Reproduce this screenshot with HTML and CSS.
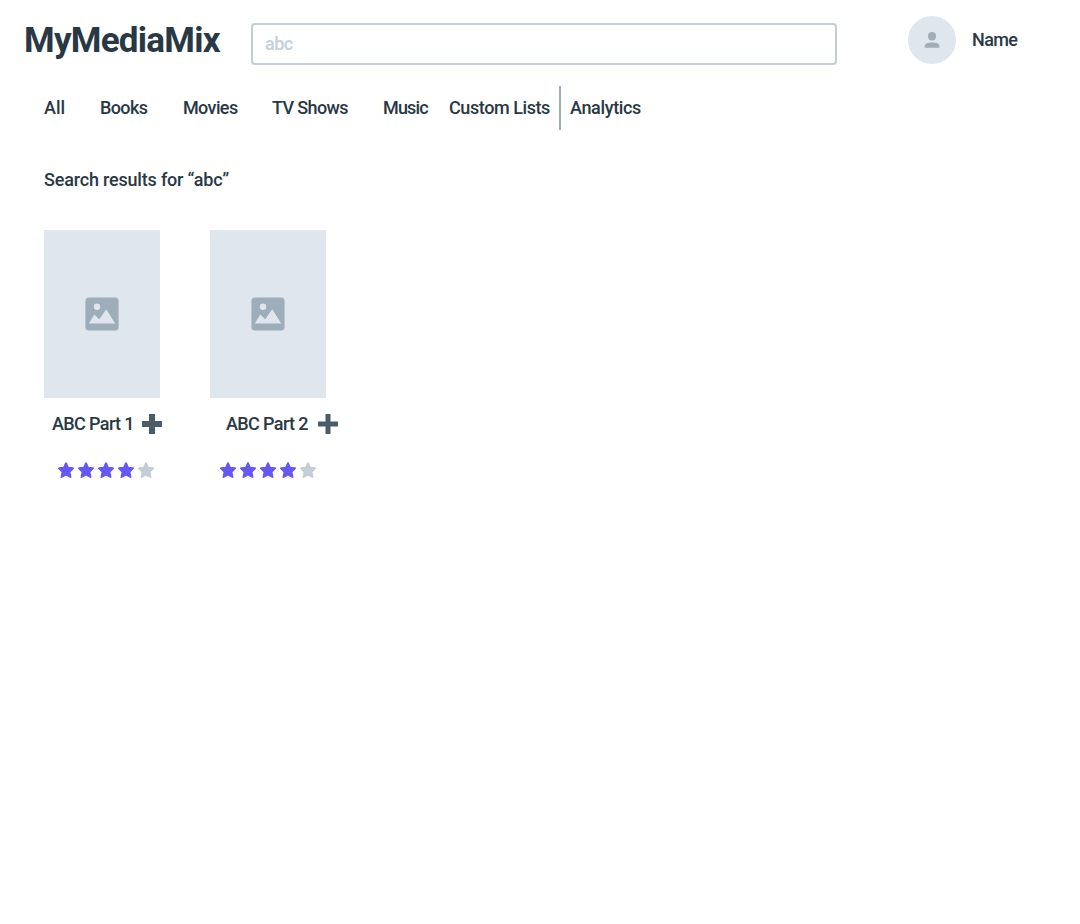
FILE: index.html
```html
<!DOCTYPE html>
<html lang="en">
<head>
<meta charset="utf-8">
<title>MyMediaMix</title>
<link rel="stylesheet" href="styles.css">
</head>
<body>
<svg class="sprite" aria-hidden="true">
  <symbol id="star" viewBox="0 0 16 16"><path d="M8 1.2 10 5.6 15 6.3 11.5 9.8 12.5 15 8 12.7 3.5 15 4.5 9.8 1 6.3 6 5.6Z" fill="currentColor" stroke="currentColor" stroke-width="1.9" stroke-linejoin="round"/></symbol>
  <symbol id="image" viewBox="0 0 34 34"><path fill-rule="evenodd" d="M4 .5H30A3.6 3.6 0 0 1 33.6 4V30A3.6 3.6 0 0 1 30 33.6H4A3.6 3.6 0 0 1 .4 30V4A3.6 3.6 0 0 1 4 .5ZM12 6.6A3.2 3.2 0 1 0 12 13A3.2 3.2 0 1 0 12 6.6ZM3.8 26.4H30.2L21.2 12.2 14.2 22.2 9.3 17.6Z" fill="#9eadba"/></symbol>
</svg>
<header class="header">
  <h1 class="logo">MyMediaMix</h1>
  <div class="search"><span>abc</span></div>
  <div class="avatar"><svg width="16" height="16" viewBox="0 0 16 16" fill="#9eadba"><ellipse cx="8" cy="4.3" rx="4" ry="4.2"/><path d="M.8 15.8V13.8C.8 11.3 4 10.5 8 10.5S15.3 11.3 15.3 13.8V15.8Z"/></svg></div>
  <span class="user">Name</span>
</header>
<nav class="nav">
  <a><span class="t-all">All</span></a>
  <a><span class="t-books">Books</span></a>
  <a><span class="t-movies">Movies</span></a>
  <a><span class="t-tv">TV Shows</span></a>
  <a><span class="t-music">Music</span></a>
  <a><span class="t-lists">Custom Lists</span></a>
  <a class="last"><span class="t-analytics">Analytics</span></a>
</nav>
<main class="main">
  <h2 class="heading">Search results for “abc”</h2>
  <div class="results">
    <article class="card">
      <div class="cover"><svg width="34" height="34"><use href="#image"/></svg></div>
      <div class="title"><span>ABC Part 1</span><svg width="20" height="20" viewBox="0 0 20 20"><path d="M7 0H13V7H20V13H13V20H7V13H0V7H7Z" fill="#4b5c6b"/></svg></div>
      <div class="stars"><svg><use href="#star"/></svg><svg><use href="#star"/></svg><svg><use href="#star"/></svg><svg><use href="#star"/></svg><svg class="off"><use href="#star"/></svg></div>
    </article>
    <article class="card second">
      <div class="cover"><svg width="34" height="34"><use href="#image"/></svg></div>
      <div class="title"><span>ABC Part 2</span><svg width="20" height="20" viewBox="0 0 20 20"><path d="M7.5 0H12.5V7.5H20V12.5H12.5V20H7.5V12.5H0V7.5H7.5Z" fill="#4b5c6b"/></svg></div>
      <div class="stars"><svg><use href="#star"/></svg><svg><use href="#star"/></svg><svg><use href="#star"/></svg><svg><use href="#star"/></svg><svg class="off"><use href="#star"/></svg></div>
    </article>
  </div>
</main>
</body>
</html>
```
FILE: styles.css
```css
* { box-sizing: border-box; }
body { margin: 0; background: #fff; color: #283845; font: 500 18px/24px Roboto, "Liberation Sans", sans-serif; white-space: nowrap; }
.sprite { display: none; }
.header { display: flex; height: 86px; padding-left: 24px; }
.logo { margin: 21px 0 0; width: 227px; font-size: 35px; line-height: 40px; font-weight: 700; letter-spacing: -.75px; }
.search { width: 586px; height: 42px; margin-top: 23px; padding: 7px 12px; border: 2px solid #c4cdd7; border-radius: 4px; color: #c4cfd9; letter-spacing: -.5px; }
.avatar { display: flex; align-items: center; justify-content: center; width: 48px; height: 48px; margin: 16px 16px 0 71px; border-radius: 50%; background: #dfe6ed; }
.user { margin-top: 28px; letter-spacing: -.6px; }
.nav { display: grid; grid-template-columns: 56px 83px 89px 111px 66px 110px 100px; height: 44px; padding-left: 44px; line-height: 44px; }
.t-books, .t-movies, .t-tv { letter-spacing: -.62px; }
.t-music { letter-spacing: -.85px; }
.t-lists { letter-spacing: -.42px; }
.t-analytics { letter-spacing: -.35px; }
.last { border-left: 2px solid #9eadba; padding-left: 9px; }
.main { padding: 38px 44px; }
.heading { margin: 0; font-size: 18px; line-height: 24px; font-weight: 500; letter-spacing: -.19px; }
.results { display: flex; gap: 50px; margin-top: 38px; }
.card { width: 116px; }
.cover { display: flex; align-items: center; justify-content: center; height: 168px; background: #dfe6ed; }
.title { display: flex; align-items: center; height: 20px; margin-top: 16px; padding-left: 8px; letter-spacing: -.62px; }
.title span { flex: 0 0 90px; }
.title svg { flex: none; }
.stars { display: flex; gap: 4px; margin: 28px 0 0 14px; color: #6558f5; }
.stars svg { flex: none; width: 16px; height: 16px; }
.stars .off { color: #c4cdd7; }
.second .title { padding-left: 16px; }
.second .title span { flex-basis: 92px; }
.second .stars { margin-left: 10px; }
```
